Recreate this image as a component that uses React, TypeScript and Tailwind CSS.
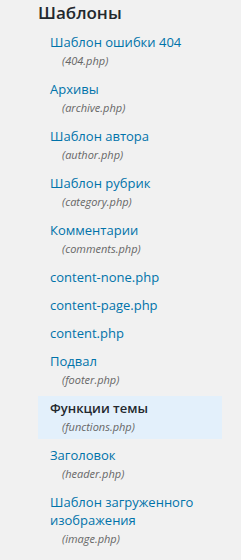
type Template = {
    label: string;
    file?: string;
    current?: boolean;
};

const templates: Template[] = [
    { label: "Шаблон ошибки 404", file: "404.php" },
    { label: "Архивы", file: "archive.php" },
    { label: "Шаблон автора", file: "author.php" },
    { label: "Шаблон рубрик", file: "category.php" },
    { label: "Комментарии", file: "comments.php" },
    { label: "content-none.php" },
    { label: "content-page.php" },
    { label: "content.php" },
    { label: "Подвал", file: "footer.php" },
    { label: "Функции темы", file: "functions.php", current: true },
    { label: "Заголовок", file: "header.php" },
    { label: "Шаблон загруженного изображения", file: "image.php" },
];

export default function App() {
    return (
        <div className="min-h-[560px] w-[241px] bg-[#f1f1f1] pl-[38px] pr-[19px] pt-[3px] font-['Open_Sans',sans-serif]">
            <h2 className="m-0 text-[17px] font-semibold leading-[20px] text-[#23282d]">
                Шаблоны
            </h2>

            <ul className="mt-[7px] flex flex-col gap-[4px]">
                {templates.map((template) => (
                    <li
                        key={template.label}
                        className={
                            template.current
                                ? "bg-[#e3f0fb] py-[3px] pl-[12px]"
                                : "py-[3px] pl-[12px]"
                        }
                    >
                        <a
                            href="#"
                            className={
                                template.current
                                    ? "block text-[13px] font-semibold leading-[18px] text-[#23282d]"
                                    : "block text-[13px] leading-[18px] text-[#0073aa]"
                            }
                        >
                            {template.label}
                        </a>
                        {template.file && (
                            <span className="block pl-[12px] text-[11px] italic leading-[19px] text-[#666]">
                                ({template.file})
                            </span>
                        )}
                    </li>
                ))}
            </ul>
        </div>
    );
}
